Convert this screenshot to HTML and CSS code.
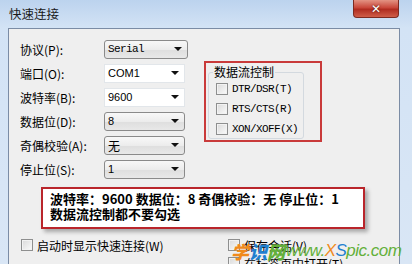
FILE: index.html
```html
<!DOCTYPE html>
<html lang="zh-CN">
    <head>
        <meta charset="UTF-8">
        <meta name="viewport" content="width=device-width,initial-scale=1.0">
        <title>快速连接</title>
        <link rel="stylesheet" href="styles.css">
    </head>
    <body>
        <div class="window">
            <div class="titlebar">
                <span class="title">快速连接</span>
                <span class="close">✕</span>
            </div>
            <div class="panel">
                <div class="top">
                    <div class="fields">
                        <label>协议(P):</label>
                        <div class="combo rounded wide mono">Serial<span class="arrow"></span></div>
                        <label>端口(O):</label>
                        <div class="combo flat num">COM1<span class="arrow"></span></div>
                        <label>波特率(B):</label>
                        <div class="combo flat num">9600<span class="arrow"></span></div>
                        <label>数据位(D):</label>
                        <div class="combo rounded num">8<span class="arrow"></span></div>
                        <label>奇偶校验(A):</label>
                        <div class="combo rounded">无<span class="arrow"></span></div>
                        <label>停止位(S):</label>
                        <div class="combo rounded num">1<span class="arrow"></span></div>
                    </div>
                    <div class="flow">
                        <fieldset class="group">
                            <legend>数据流控制</legend>
                            <div class="check mono"><span class="box"></span>DTR/DSR(T)</div>
                            <div class="check mono"><span class="box"></span>RTS/CTS(R)</div>
                            <div class="check mono"><span class="box"></span>XON/XOFF(X)</div>
                        </fieldset>
                    </div>
                </div>
                <div class="callout">
                    <p>波特率：9600 数据位：8 奇偶校验：无 停止位：1</p>
                    <p>数据流控制都不要勾选</p>
                </div>
                <div class="bottom">
                    <div class="check"><span class="box"></span>启动时显示快速连接(W)</div>
                    <div class="right">
                        <div class="check"><span class="box"></span>保存会话(V)</div>
                        <div class="check"><span class="box"></span>在标签页中打开(T)</div>
                    </div>
                </div>
            </div>
            <div class="watermark">
                <span class="wm-cn"><b class="orange">学</b><b class="blue">识</b><b class="green">网</b></span>
                <span class="wm-url"><span class="green">www.</span><span class="orange">X</span><span class="blue">S</span><span class="green">pic.com</span></span>
            </div>
        </div>
    </body>
</html>
```

FILE: styles.css
```css
*{
    margin: 0;
    padding: 0;
    box-sizing: border-box;
}
body{
    width: 412px;
    height: 264px;
    overflow: hidden;
    font-family: "Noto Sans CJK SC", sans-serif;
    font-size: 12px;
    color: #000;
}
.window{
    position: relative;
    width: 412px;
    height: 264px;
    overflow: hidden;
    background: linear-gradient(180deg, #bcd3ee 0%, #d3e3f5 28px, #d9e6f5 100%);
}
.titlebar{
    height: 28px;
    display: flex;
    align-items: flex-start;
    padding-left: 9px;
}
.title{
    line-height: 28px;
    font-size: 12.5px;
    color: #1b1b1b;
}
.close{
    margin-left: auto;
    margin-right: 13px;
    width: 46px;
    height: 18px;
    display: flex;
    align-items: center;
    justify-content: center;
    border: 1px solid #7d2a20;
    border-top: none;
    border-radius: 0 0 4px 4px;
    background: linear-gradient(#e39383, #c9473a 45%, #b02c20 55%, #cf5d48);
    color: #fff;
    font: bold 12px "DejaVu Sans", sans-serif;
    text-shadow: 0 0 2px #3a0d08;
}
.panel{
    margin-left: 8px;
    width: 392px;
    height: 236px;
    border: 1px solid #7b8ca5;
    border-bottom: none;
    background: #efefef;
    padding: 8px 0 0 11px;
}
.top{
    display: flex;
    gap: 16px;
}
.fields{
    display: grid;
    grid-template-columns: 84px auto;
    grid-auto-rows: 24px;
    align-items: center;
}
.combo{
    width: 81px;
    height: 19px;
    display: flex;
    align-items: center;
    justify-content: space-between;
    padding: 0 5px 0 3px;
}
.combo.wide{
    width: 84px;
}
.combo.rounded{
    border: 1px solid #8a8a8a;
    border-radius: 3px;
    background: linear-gradient(#f8f8f8, #ececec 50%, #dedede 51%, #e8e8e8);
}
.combo.flat{
    border: 1px solid #e2e6ea;
    background: #fff;
}
.arrow{
    width: 0;
    height: 0;
    border-left: 4px solid transparent;
    border-right: 4px solid transparent;
    border-top: 4px solid #111;
}
.mono{
    font-family: "Liberation Mono", monospace;
    font-size: 11px;
    letter-spacing: -0.6px;
}
.num{
    font-family: "Liberation Sans", sans-serif;
    font-size: 11px;
}
.flow{
    margin-top: 24px;
    width: 118px;
    height: 81px;
    border: 2px solid #c93a3a;
    padding: 0 2px;
}
.group{
    margin-top: 2px;
    width: 96px;
    height: 74px;
    border: 1px solid #d3d9df;
    border-radius: 3px;
    padding: 0 0 0 7px;
}
.group legend{
    margin-left: -3px;
    padding: 0 1px;
    line-height: 14px;
    font-size: 12px;
}
.check{
    height: 20px;
    display: flex;
    align-items: center;
    gap: 4px;
    white-space: nowrap;
}
.box{
    flex: none;
    width: 12px;
    height: 12px;
    border: 1px solid #8e8f8f;
    background: linear-gradient(135deg, #d9d9d9, #fbfbfb);
    box-shadow: inset 0 0 0 1px #f2f2f2;
}
.callout{
    margin: 6px 0 0 21px;
    width: 324px;
    height: 42px;
    border: 2px solid #b9252b;
    background: #fff;
    box-shadow: 3px 3px 4px rgba(0,0,0,0.3);
    padding: 2px 0 0 7px;
    font-weight: bold;
    font-size: 13px;
    line-height: 15px;
    white-space: nowrap;
}
.bottom{
    margin-top: 7px;
    display: grid;
    grid-template-columns: 207px auto;
    padding-left: 1px;
}
.bottom .check{
    height: 18px;
}
.watermark{
    position: absolute;
    left: 231px;
    top: 240px;
    display: flex;
    align-items: center;
    gap: 1px;
}
.wm-cn{
    font-size: 18px;
    font-style: italic;
    font-weight: 900;
    line-height: 22px;
}
.wm-url{
    font-family: "Liberation Sans", sans-serif;
    font-style: italic;
    font-size: 17px;
    letter-spacing: -0.5px;
    line-height: 22px;
}
.orange{
    color: #f08a1c;
}
.blue{
    color: #1f80d0;
}
.green{
    color: #63b03a;
}
```
